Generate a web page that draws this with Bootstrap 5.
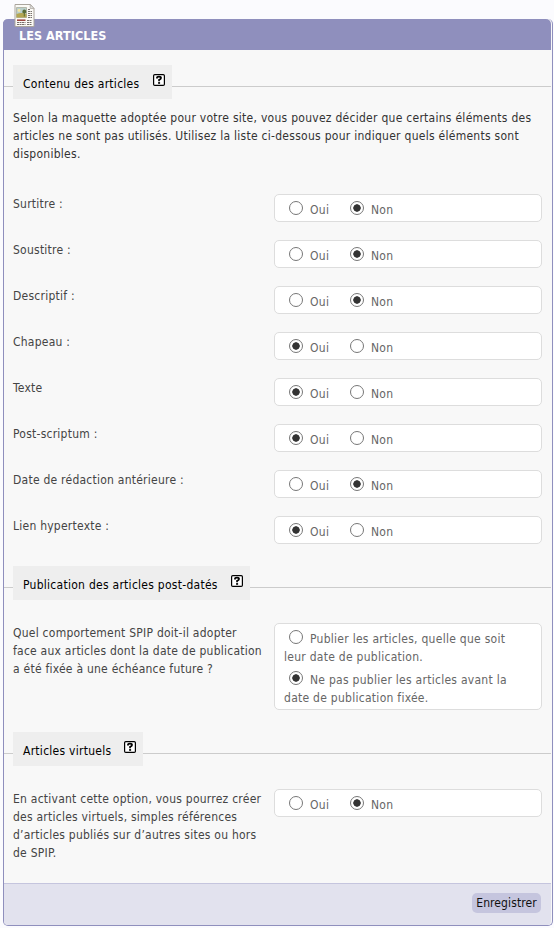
<!DOCTYPE html>
<html lang="fr">
<head>
<meta charset="utf-8">
<meta name="viewport" content="width=device-width, initial-scale=1">
<title>Les articles</title>
<link href="https://cdn.jsdelivr.net/npm/bootstrap@5.3.0/dist/css/bootstrap.min.css" rel="stylesheet">
<style>
body{background:#fbfbfe;font:12px/18px "DejaVu Sans Condensed","DejaVu Sans",sans-serif;font-stretch:condensed;color:#333;letter-spacing:.27px}
.panel{margin:19px 1px 0 3px;height:907px;background:#f8f8f8;border:1px solid #8f8fbd;border-top:0;border-radius:5px}
.panel-title{height:31px;margin:0 1px 0 -1px;padding:7px 0 0 16px;background:#8f8fbd;color:#fff;font-size:12.5px;line-height:19px;letter-spacing:.05px;border-radius:5px 5px 0 0}
.page-icon{left:10px;top:-16px}
.sections{padding-top:15px}
.legend-row{height:34px;padding-left:9px;margin-right:1px;background:linear-gradient(#ccc,#ccc) 0 21px/100% 1px no-repeat}
.legend-tag{height:34px;background:#eee;color:#000;padding:10px 7px 0 10px}
.help{width:12px;height:12px;margin-top:-1px}
.intro{margin:10px 8px 31px 9px;white-space:nowrap}
.setting{padding:0 10px 0 9px;margin-bottom:18px;color:#444}
.caption{width:261px;padding-top:1px;margin-bottom:-1px;white-space:nowrap;letter-spacing:.24px}
.choices{width:268px;min-height:28px;background:#fff;border:1px solid #ddd;border-radius:5px;color:#666;padding:0 0 0 14px}
.choice{width:61px;height:26px;white-space:nowrap}
.choice .txt{padding-top:6px;margin-left:7px}
.rad{appearance:none;width:14px;height:14px;margin:6px 0 0;border:1.6px solid #777;border-radius:50%;background:#fff;flex:none}
.rad:checked{background:radial-gradient(circle,#333 0 3.4px,#fff 4px)}
.long{padding:1px 0 0 9px;height:87px;white-space:nowrap}
.long label{height:41px}
.long .rad{margin:5px 7px 0 5px}
.long .txt{padding-top:5px}
.next{margin-top:22px}
.after{margin-top:23px}
.foot{height:42px;margin:0 1px 0 0;background:#e2e2ee;border-top:1px solid #c5c5de;border-radius:0 0 4px 4px;padding:9px 10px 0 0}
.save{height:20px;width:69px;padding:0;background:#c5c5de;color:#111;border:0;border-radius:5px;font:inherit;line-height:20px;letter-spacing:.1px}
</style>
<script src="https://cdn.jsdelivr.net/npm/bootstrap@5.3.0/dist/js/bootstrap.bundle.min.js"></script>
</head>
<body>
<svg width="0" height="0" class="position-absolute"><symbol id="help" viewBox="0 0 12 12"><rect x=".6" y=".6" width="10.8" height="10.8" rx="1.2" fill="#fff" stroke="#000" stroke-width="1.2"/><path d="M4 4.5V3.8Q4 2.6 6 2.6T8 4.1Q8 5.1 6.1 5.8V7.2" fill="none" stroke="#000" stroke-width="1.8"/><path d="M5.1 8.1h2v1.7h-2z"/></symbol></svg>
<form class="panel position-relative d-flex flex-column">
<svg class="page-icon position-absolute" width="21" height="25" viewBox="0 0 21 25"><path d="M1 1.5h15.500l3.500 4V23.500H1z" fill="#fbfaf6" stroke="#aaa59d"/><path d="M16.200 1.500v4h3.800z" fill="#ddd" stroke="#aaa59d" stroke-width=".7"/><path d="M2.500 4.500h10v10h-10z" fill="#b9cfca" stroke="#9b9a86" stroke-width=".6"/><path d="M2.500 11q5-2 10 0v3.500h-10z" fill="#b4a651"/><circle cx="5" cy="7.500" r="1.400" fill="#f4e4a2"/><path d="M8.300 9.500q0-3 2-3t2 3l-1.500 1v3h-1v-3z" fill="#596c36"/><path d="M14 6.500h2M14 8.500h4M14 10.500h4M14 12.500h4M3 19.500h8.500M3 21.500h8.500M14 14.500h4M13 17.500h5M13 19.500h5M13 21.500h5" stroke="#77706b" stroke-dasharray="2 .5"/><path d="M3 17.200h8.500" stroke="#963d35" stroke-width="1.500"/></svg>
<h1 class="panel-title fw-bold text-uppercase flex-shrink-0">Les articles</h1>
<div class="sections flex-grow-1">
<div class="legend-row d-flex"><div class="legend-tag d-flex justify-content-between" style="width:159px"><span>Contenu des articles</span><svg class="help"><use href="#help"/></svg></div></div>
<p class="intro">Selon la maquette adoptée pour votre site, vous pouvez décider que certains éléments des<br>articles ne sont pas utilisés. Utilisez la liste ci-dessous pour indiquer quels éléments sont<br>disponibles.</p>
<div class="setting d-flex"><div class="caption">Surtitre :</div><div class="choices d-flex"><label class="choice d-flex"><input class="rad" type="radio" name="a"><span class="txt">Oui</span></label><label class="choice d-flex"><input class="rad" type="radio" name="a" checked><span class="txt">Non</span></label></div></div>
<div class="setting d-flex"><div class="caption">Soustitre :</div><div class="choices d-flex"><label class="choice d-flex"><input class="rad" type="radio" name="b"><span class="txt">Oui</span></label><label class="choice d-flex"><input class="rad" type="radio" name="b" checked><span class="txt">Non</span></label></div></div>
<div class="setting d-flex"><div class="caption">Descriptif :</div><div class="choices d-flex"><label class="choice d-flex"><input class="rad" type="radio" name="c"><span class="txt">Oui</span></label><label class="choice d-flex"><input class="rad" type="radio" name="c" checked><span class="txt">Non</span></label></div></div>
<div class="setting d-flex"><div class="caption">Chapeau :</div><div class="choices d-flex"><label class="choice d-flex"><input class="rad" type="radio" name="d" checked><span class="txt">Oui</span></label><label class="choice d-flex"><input class="rad" type="radio" name="d"><span class="txt">Non</span></label></div></div>
<div class="setting d-flex"><div class="caption">Texte</div><div class="choices d-flex"><label class="choice d-flex"><input class="rad" type="radio" name="e" checked><span class="txt">Oui</span></label><label class="choice d-flex"><input class="rad" type="radio" name="e"><span class="txt">Non</span></label></div></div>
<div class="setting d-flex"><div class="caption">Post-scriptum :</div><div class="choices d-flex"><label class="choice d-flex"><input class="rad" type="radio" name="f" checked><span class="txt">Oui</span></label><label class="choice d-flex"><input class="rad" type="radio" name="f"><span class="txt">Non</span></label></div></div>
<div class="setting d-flex"><div class="caption">Date de rédaction antérieure :</div><div class="choices d-flex"><label class="choice d-flex"><input class="rad" type="radio" name="g"><span class="txt">Oui</span></label><label class="choice d-flex"><input class="rad" type="radio" name="g" checked><span class="txt">Non</span></label></div></div>
<div class="setting d-flex"><div class="caption">Lien hypertexte :</div><div class="choices d-flex"><label class="choice d-flex"><input class="rad" type="radio" name="h" checked><span class="txt">Oui</span></label><label class="choice d-flex"><input class="rad" type="radio" name="h"><span class="txt">Non</span></label></div></div>
<div class="legend-row d-flex next"><div class="legend-tag d-flex justify-content-between" style="width:237px"><span>Publication des articles post-datés</span><svg class="help"><use href="#help"/></svg></div></div>
<div class="setting d-flex after"><div class="caption">Quel comportement SPIP doit-il adopter<br>face aux articles dont la date de publication<br>a été fixée à une échéance future ?</div><div class="choices long"><label class="d-block"><span class="d-flex"><input class="rad" type="radio" name="i"><span class="txt">Publier les articles, quelle que soit</span></span>leur date de publication.</label><label class="d-block"><span class="d-flex"><input class="rad" type="radio" name="i" checked><span class="txt">Ne pas publier les articles avant la</span></span>date de publication fixée.</label></div></div>
<div class="legend-row d-flex next"><div class="legend-tag d-flex justify-content-between" style="width:130px"><span>Articles virtuels</span><svg class="help"><use href="#help"/></svg></div></div>
<div class="setting d-flex align-items-start after"><div class="caption">En activant cette option, vous pourrez créer<br>des articles virtuels, simples références<br>d’articles publiés sur d’autres sites ou hors<br>de SPIP.</div><div class="choices d-flex"><label class="choice d-flex"><input class="rad" type="radio" name="j"><span class="txt">Oui</span></label><label class="choice d-flex"><input class="rad" type="radio" name="j" checked><span class="txt">Non</span></label></div></div>
</div>
<div class="foot d-flex justify-content-end align-items-start flex-shrink-0"><button class="save" type="button">Enregistrer</button></div>
</form>
</body>
</html>
